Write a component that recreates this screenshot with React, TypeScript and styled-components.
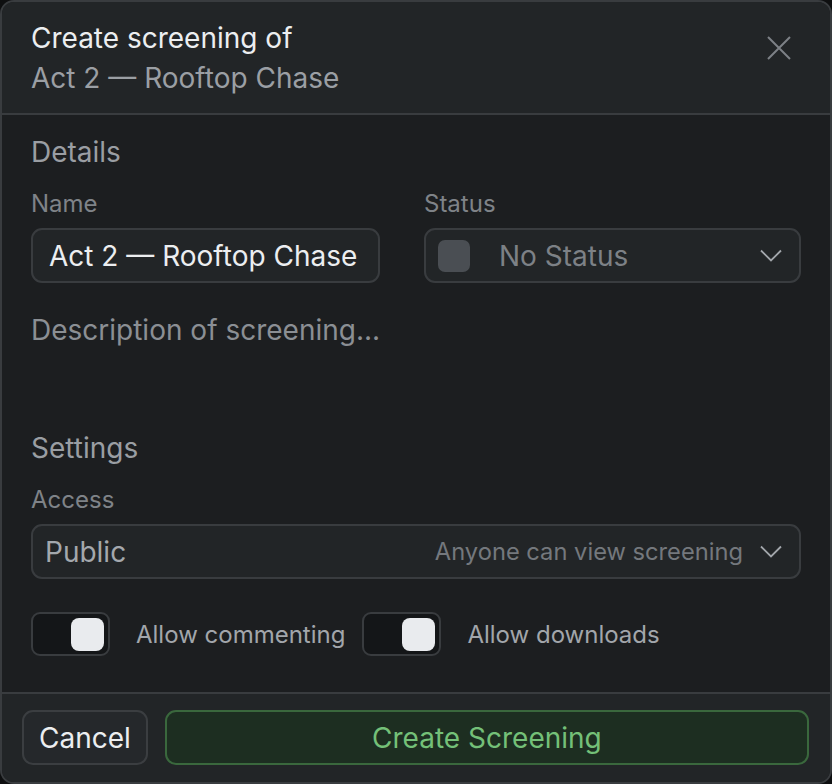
import React, { useState } from 'react';
import styled, { createGlobalStyle } from 'styled-components';

const GlobalStyle = createGlobalStyle`
  html, body {
    margin: 0;
    padding: 0;
    background: #0e0f10;
  }
  * {
    box-sizing: border-box;
  }
  body {
    font-family: Inter, "Noto Sans", sans-serif;
  }
`;

const Dialog = styled.div`
  width: 832px;
  height: 784px;
  display: flex;
  flex-direction: column;
  background: #1c1e20;
  border: 2px solid #393c3f;
  border-radius: 14px;
  overflow: hidden;
`;

const Header = styled.div`
  display: flex;
  justify-content: space-between;
  align-items: flex-start;
  padding: 16px 31px 15px 29px;
  background: #222527;
  border-bottom: 2px solid #393c3f;
`;

const Titles = styled.div`
  display: flex;
  flex-direction: column;
`;

const Title = styled.div<{ $muted?: boolean }>`
  font-size: 28px;
  line-height: 40px;
  color: ${({ $muted }) => ($muted ? '#9b9fa4' : '#eceef0')};
`;

const CloseButton = styled.button`
  background: none;
  border: none;
  padding: 0;
  margin-top: 18px;
  margin-right: 8px;
  width: 24px;
  height: 24px;
  display: flex;
  align-items: center;
  justify-content: center;
  cursor: pointer;
`;

const Body = styled.div`
  flex: 1;
  display: flex;
  flex-direction: column;
  padding: 22px 29px 0 29px;
`;

const SectionTitle = styled.div<{ $top?: number }>`
  font-size: 28px;
  line-height: 30px;
  color: #9a9ea3;
  margin-top: ${({ $top }) => $top ?? 0}px;
  margin-bottom: 25px;
`;

const FieldGrid = styled.div`
  display: grid;
  grid-template-columns: 349px 1fr;
  column-gap: 44px;
`;

const Field = styled.div`
  display: flex;
  flex-direction: column;
  gap: 12px;
`;

const Label = styled.div`
  font-size: 24px;
  line-height: 24px;
  color: #7f8388;
`;

const Box = styled.div`
  height: 55px;
  flex-shrink: 0;
  display: flex;
  align-items: center;
  background: #222527;
  border: 2px solid #393c3f;
  border-radius: 11px;
  font-size: 28px;
`;

const NameInput = styled(Box)`
  padding: 0 16px;
  color: #eceef0;
  white-space: nowrap;
`;

const StatusSelect = styled(Box)`
  padding: 0 17px 0 12px;
  color: #7d8186;
`;

const Swatch = styled.span`
  width: 32px;
  height: 32px;
  border-radius: 7px;
  background: #4a4e53;
  margin-right: 29px;
  flex-shrink: 0;
`;

const Grow = styled.span`
  flex: 1;
`;

const Description = styled.div`
  margin-top: 32px;
  height: 103px;
  font-size: 28px;
  line-height: 30px;
  color: #8b8f94;
`;

const AccessSelect = styled(Box)`
  margin-top: 12px;
  padding: 0 17px 0 12px;
  color: #a4a8ad;
`;

const AccessHint = styled.span`
  color: #74787d;
  font-size: 23.7px;
  margin-right: 17px;
`;

const ToggleRow = styled.div`
  margin-top: 33px;
  display: flex;
  align-items: center;
  gap: 17px;
`;

const ToggleItem = styled.label`
  display: flex;
  align-items: center;
  gap: 26px;
  font-size: 24px;
  color: #a2a6ab;
  cursor: pointer;
`;

const Track = styled.span<{ $on: boolean }>`
  width: 79px;
  height: 44px;
  display: flex;
  align-items: center;
  justify-content: ${({ $on }) => ($on ? 'flex-end' : 'flex-start')};
  padding: 0 4px;
  background: #141618;
  border: 2px solid #393c3f;
  border-radius: 9px;
`;

const Knob = styled.span`
  width: 33px;
  height: 33px;
  border-radius: 8px;
  background: #e9ebee;
`;

const Footer = styled.div`
  display: flex;
  gap: 17px;
  padding: 16px 21px 17px 20px;
  background: #222527;
  border-top: 2px solid #393c3f;
`;

const Button = styled.button<{ $primary?: boolean }>`
  height: 55px;
  border-radius: 11px;
  font-family: Inter, "Noto Sans", sans-serif;
  font-size: 28px;
  cursor: pointer;
  padding: 0 15px;
  flex: ${({ $primary }) => ($primary ? 1 : 'none')};
  background: ${({ $primary }) => ($primary ? '#1d2e21' : '#25282b')};
  border: 2px solid ${({ $primary }) => ($primary ? '#3a683d' : '#3b3e41')};
  color: ${({ $primary }) => ($primary ? '#74c078' : '#eceef0')};
`;

const Chevron = () => (
  <svg width="22" height="14" viewBox="0 0 22 14" fill="none">
    <polyline points="1,1.5 11,11.5 21,1.5" stroke="#a2a6ab" strokeWidth="1.8" />
  </svg>
);

const Toggle: React.FC<{ label: string; on: boolean; onChange: () => void }> = ({
  label,
  on,
  onChange,
}) => (
  <ToggleItem onClick={onChange}>
    <Track $on={on}>
      <Knob />
    </Track>
    {label}
  </ToggleItem>
);

export default function App() {
  const [commenting, setCommenting] = useState(true);
  const [downloads, setDownloads] = useState(true);

  return (
    <>
      <GlobalStyle />
      <Dialog>
        <Header>
          <Titles>
            <Title>Create screening of</Title>
            <Title $muted>Act 2 — Rooftop Chase</Title>
          </Titles>
          <CloseButton aria-label="Close">
            <svg width="24" height="24" viewBox="0 0 24 24" fill="none">
              <path d="M1 1L23 23M23 1L1 23" stroke="#7d8186" strokeWidth="2" />
            </svg>
          </CloseButton>
        </Header>

        <Body>
          <SectionTitle>Details</SectionTitle>
          <FieldGrid>
            <Field>
              <Label>Name</Label>
              <NameInput>Act 2 — Rooftop Chase</NameInput>
            </Field>
            <Field>
              <Label>Status</Label>
              <StatusSelect>
                <Swatch />
                <Grow>No Status</Grow>
                <Chevron />
              </StatusSelect>
            </Field>
          </FieldGrid>

          <Description>Description of screening...</Description>

          <SectionTitle $top={15}>Settings</SectionTitle>
          <Label>Access</Label>
          <AccessSelect>
            <Grow>Public</Grow>
            <AccessHint>Anyone can view screening</AccessHint>
            <Chevron />
          </AccessSelect>

          <ToggleRow>
            <Toggle label="Allow commenting" on={commenting} onChange={() => setCommenting(!commenting)} />
            <Toggle label="Allow downloads" on={downloads} onChange={() => setDownloads(!downloads)} />
          </ToggleRow>
        </Body>

        <Footer>
          <Button>Cancel</Button>
          <Button $primary>Create Screening</Button>
        </Footer>
      </Dialog>
    </>
  );
}
